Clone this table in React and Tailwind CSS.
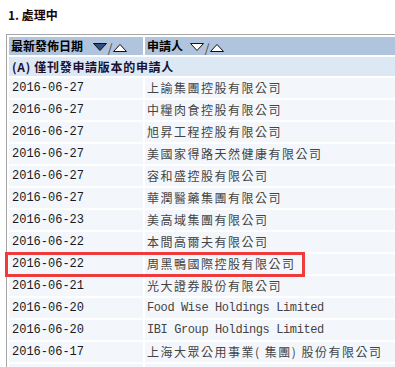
const rows = [
  ['2016-06-27', '上諭集團控股有限公司'],
  ['2016-06-27', '中糧肉食控股有限公司'],
  ['2016-06-27', '旭昇工程控股有限公司'],
  ['2016-06-27', '美國家得路天然健康有限公司'],
  ['2016-06-27', '容和盛控股有限公司'],
  ['2016-06-27', '華潤醫藥集團有限公司'],
  ['2016-06-23', '美高域集團有限公司'],
  ['2016-06-22', '本間高爾夫有限公司'],
  ['2016-06-22', '周黑鴨國際控股有限公司'],
  ['2016-06-21', '光大證券股份有限公司'],
  ['2016-06-20', 'Food Wise Holdings Limited', true],
  ['2016-06-20', 'IBI Group Holdings Limited', true],
  ['2016-06-17', '上海大眾公用事業( 集團) 股份有限公司'],
  ['', ''],
];

function Tri({ down, filled }) {
  return (
    <svg width="14" height="9" viewBox="0 0 14 9" className="inline-block">
      {down ? (
        <polygon points="0.5,0.5 13.5,0.5 7,7.5" fill={filled ? '#2d4f82' : '#ffffff'} stroke="#111" strokeWidth="1" />
      ) : (
        <polygon points="0.5,8.5 13.5,8.5 7,1.5" fill="#ffffff" stroke="#111" strokeWidth="1" />
      )}
    </svg>
  );
}

function SortIcons({ active }) {
  return (
    <span className="inline-flex items-center gap-[1px] align-middle">
      <Tri down filled={active} />
      <span className="text-[12px] font-normal text-[#5a3a2a] leading-none">/</span>
      <Tri />
    </span>
  );
}

export default function App() {
  return (
    <div className="relative w-[395px] h-[367px] overflow-hidden bg-white">
      <div className="h-[34px] pl-[8px] pt-[7px] text-[12px] leading-[16px] font-bold text-[#1a0505] font-['Noto_Sans_CJK_TC',sans-serif]">
        1. 處理中
      </div>

      <table className="ml-[6px] w-[430px] table-fixed border-separate border-spacing-[2px] border-l border-t border-[#a6a6a6]">
        <colgroup>
          <col className="w-[134px]" />
          <col />
        </colgroup>
        <thead>
          <tr className="h-[18px]">
            <th className="p-0 pl-[2px] text-left bg-[#b0c4de] text-[12px] leading-[18px] font-bold text-[#000] font-['Noto_Sans_CJK_TC',sans-serif] whitespace-nowrap">
              最新發佈日期 <span className="ml-[7px]"><SortIcons active /></span>
            </th>
            <th className="p-0 pl-[2px] text-left bg-[#b0c4de] text-[12px] leading-[18px] font-bold text-[#000] font-['Noto_Sans_CJK_TC',sans-serif] whitespace-nowrap">
              申請人 <span className="ml-[4px]"><SortIcons /></span>
            </th>
          </tr>
        </thead>
        <tbody>
          <tr className="h-[19px]">
            <td colSpan={2} className="p-0 pl-[3px] bg-[#dce9f5] text-[12px] leading-[19px] font-bold tracking-[0.7px] text-[#1c1030] font-['Noto_Sans_CJK_TC',sans-serif] whitespace-nowrap">
              (A) 僅刊發申請版本的申請人
            </td>
          </tr>
          {rows.map(([date, name, latin], i) => (
            <tr key={i} className="h-[20px]">
              <td className="p-0 pl-[3px] bg-[#f3f7fc] text-[12px] leading-[20px] text-[#1a1a1a] font-['Liberation_Mono',monospace] whitespace-nowrap">
                {date}
              </td>
              {latin ? (
                <td className="p-0 pl-[2px] bg-[#f3f7fc] text-[12px] leading-[20px] tracking-[-0.4px] text-[#444] font-['Liberation_Mono',monospace] whitespace-nowrap">
                  {name}
                </td>
              ) : (
                <td className="p-0 pl-[2px] bg-[#f3f7fc] text-[12px] leading-[20px] tracking-[1.5px] text-[#444] font-['Noto_Sans_CJK_TC',sans-serif] whitespace-nowrap">
                  {name}
                </td>
              )}
            </tr>
          ))}
        </tbody>
      </table>

      <div className="absolute left-[5px] top-[252px] w-[300px] h-[25px] border-[3px] border-[#ef3b3b] pointer-events-none" />
    </div>
  );
}
